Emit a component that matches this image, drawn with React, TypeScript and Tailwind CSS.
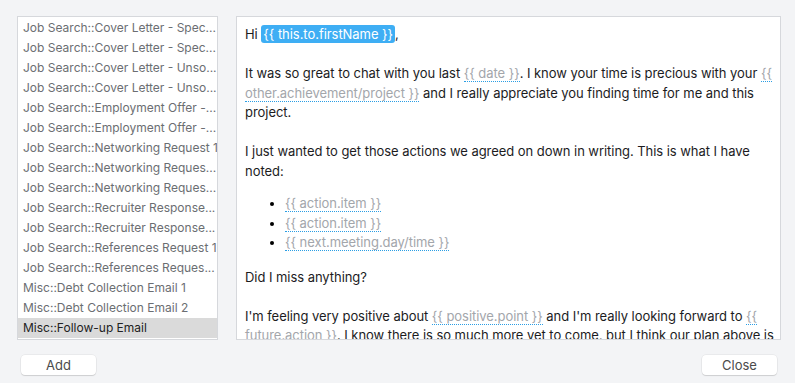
import React from 'react';

const TEMPLATES = [
  'Job Search::Cover Letter - Spec...',
  'Job Search::Cover Letter - Spec...',
  'Job Search::Cover Letter - Unso...',
  'Job Search::Cover Letter - Unso...',
  'Job Search::Employment Offer -...',
  'Job Search::Employment Offer -...',
  'Job Search::Networking Request 1',
  'Job Search::Networking Reques...',
  'Job Search::Networking Reques...',
  'Job Search::Recruiter Response...',
  'Job Search::Recruiter Response...',
  'Job Search::References Request 1',
  'Job Search::References Reques...',
  'Misc::Debt Collection Email 1',
  'Misc::Debt Collection Email 2',
  'Misc::Follow-up Email',
];

const Field = ({ children }: { children: React.ReactNode }) => (
  <span className="text-[#a3a6ab] border-b-[1.5px] border-dotted border-[#2b9ee4]">{`{{ ${children} }}`}</span>
);

export default function App() {
  return (
    <div
      className="w-[795px] h-[383px] bg-[#f3f4f6] flex flex-col overflow-hidden"
      style={{ fontFamily: 'Inter, "Noto Sans", sans-serif' }}
    >
      <div className="flex pt-4 pl-[17px] gap-[18px]">
        {/* template list */}
        <div className="w-[201px] h-[324px] bg-white border border-[#d6d8dc] py-px overflow-hidden">
          {TEMPLATES.map((name, i) => {
            const selected = i === TEMPLATES.length - 1;
            return (
              <div
                key={i}
                className={`h-5 leading-5 pl-[5px] text-[12px] whitespace-nowrap overflow-hidden ${
                  selected ? 'bg-[#dadada] text-[#222]' : 'text-[#6b6e72]'
                }`}
              >
                {name}
              </div>
            );
          })}
        </div>

        {/* preview */}
        <div className="w-[545px] h-[324px] bg-white border border-[#d6d8dc] overflow-hidden pl-2 pr-[3px] pt-[8px] text-[13px] leading-[19.5px] tracking-[-0.05px] text-[#1c1c1e]">
          <p>
            Hi{' '}
            <span className="bg-[#3eaef4] text-white rounded-[3px] px-[2px] py-[1px]">{'{{ this.to.firstName }}'}</span>,
          </p>
          <p>&nbsp;</p>
          <p>
            It was so great to chat with you last <Field>date</Field>. I know your time is precious with your{' '}
            <Field>other.achievement/project</Field> and I really appreciate you finding time for me and this project.
          </p>
          <p>&nbsp;</p>
          <p>I just wanted to get those actions we agreed on down in writing. This is what I have noted:</p>
          <ul className="list-disc pl-10 mt-[13px] mb-[15px] marker:text-black">
            <li>
              <Field>action.item</Field>
            </li>
            <li>
              <Field>action.item</Field>
            </li>
            <li>
              <Field>next.meeting.day/time</Field>
            </li>
          </ul>
          <p>Did I miss anything?</p>
          <p>&nbsp;</p>
          <p>
            I'm feeling very positive about <Field>positive.point</Field> and I'm really looking forward to{' '}
            <Field>future.action</Field>. I know there is so much more yet to come, but I think our plan above is a
            great start.
          </p>
        </div>
      </div>

      <div className="flex justify-between pl-[21px] pr-[18px] pt-[15px]">
        <button className="w-[75px] h-5 bg-white rounded-[4px] shadow-[0_0_0_0.5px_rgba(0,0,0,0.08),0_1px_1px_rgba(0,0,0,0.12)] text-[13px] leading-5 text-[#4b4b4b]">
          Add
        </button>
        <button className="w-[75px] h-5 bg-white rounded-[4px] shadow-[0_0_0_0.5px_rgba(0,0,0,0.08),0_1px_1px_rgba(0,0,0,0.12)] text-[13px] leading-5 text-[#4b4b4b]">
          Close
        </button>
      </div>
    </div>
  );
}
